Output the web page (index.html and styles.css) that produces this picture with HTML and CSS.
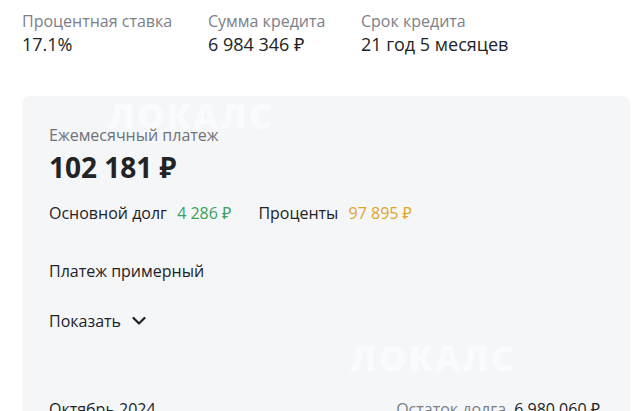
FILE: index.html
```html
<!DOCTYPE html>
<html>
<head>
<meta charset="utf-8">
<title>Кредит</title>
<link rel="stylesheet" href="styles.css">
</head>
<body>
<div class="summary">
  <div class="stat">
    <div class="stat-label">Процентная ставка</div>
    <div class="stat-value">17.1%</div>
  </div>
  <div class="stat">
    <div class="stat-label">Сумма кредита</div>
    <div class="stat-value">6 984 346 ₽</div>
  </div>
  <div class="stat">
    <div class="stat-label">Срок кредита</div>
    <div class="stat-value">21 год 5 месяцев</div>
  </div>
</div>

<div class="card">
  <div class="watermark wm-top">ЛОКАЛС</div>
  <div class="watermark wm-bottom">ЛОКАЛС</div>

  <div class="pay-label">Ежемесячный платеж</div>
  <div class="pay-value">102 181 ₽</div>

  <div class="split">
    <span>Основной долг <b class="green">4 286 ₽</b></span>
    <span>Проценты <b class="orange">97 895 ₽</b></span>
  </div>

  <div class="note">Платеж примерный</div>

  <div class="toggle">Показать
    <svg width="14" height="10" viewBox="0 0 14 10"><path d="M1.5 2 L7 7.5 L12.5 2" fill="none" stroke="#222" stroke-width="2.2" stroke-linecap="round" stroke-linejoin="round"/></svg>
  </div>

  <div class="row">
    <span>Октябрь 2024</span>
    <span><span class="muted">Остаток долга</span> 6 980 060 ₽</span>
  </div>
</div>
</body>
</html>
```

FILE: styles.css
```css
html, body {
	height: 411px;
	overflow: hidden;
}

body {
	margin: 0;
	padding: 0 10px 0 22px;
	background: #fff;
	font-family: "Open Sans", "Noto Sans", sans-serif;
	color: #222326;
}

.summary {
	display: grid;
	grid-template-columns: 186px 153px auto;
	padding-top: 10px;
	height: 96px;
	box-sizing: border-box;
}

.stat-label {
	font-size: 16px;
	color: #7c8088;
	line-height: 22px;
}

.stat-value {
	font-size: 18px;
	line-height: 24px;
}

.card {
	position: relative;
	background: #f5f6f8;
	border-radius: 8px;
	padding: 28px 27px 0 27px;
	height: 400px;
}

.watermark {
	position: absolute;
	color: #fafbfc;
	font-weight: 800;
	font-size: 35px;
	line-height: 40px;
	letter-spacing: 2px;
}

.wm-top { left: 86px; top: 0; }
.wm-bottom { left: 328px; top: 242px; }

.pay-label {
	position: relative;
	font-size: 16px;
	color: #6e727a;
	line-height: 22px;
}

.pay-value {
	position: relative;
	font-size: 28px;
	font-weight: 700;
	line-height: 36px;
	margin-top: 3px;
}

.split {
	position: relative;
	display: flex;
	gap: 27px;
	font-size: 16px;
	margin-top: 17px;
	line-height: 22px;
}

.split b {
	font-weight: 400;
	margin-left: 6px;
}

.green { color: #3aa05e; }
.orange { color: #e0a52c; }

.note {
	position: relative;
	font-size: 16px;
	margin-top: 36px;
	line-height: 22px;
}

.toggle {
	position: relative;
	display: flex;
	align-items: center;
	gap: 11px;
	font-size: 16px;
	margin-top: 28px;
	line-height: 22px;
}

.row {
	position: relative;
	display: flex;
	justify-content: space-between;
	font-size: 16px;
	margin-top: 66px;
	line-height: 22px;
	padding-right: 3px;
}

.muted { color: #7c8088; margin-right: 4px; }
```
